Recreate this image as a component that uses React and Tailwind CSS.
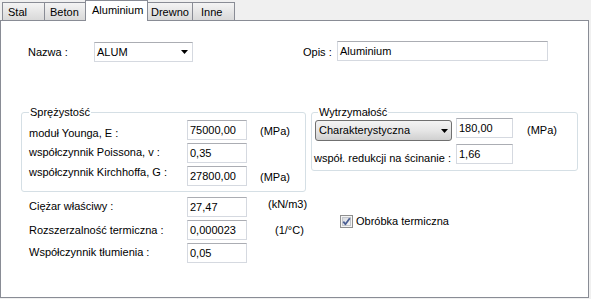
import React from "react";

function TextBox({ value, className = "" }) {
  return (
    <div
      className={`flex h-[20px] shrink-0 items-center border border-[#d5d9e0] border-t-[#abadb3] bg-white pl-[2px] ${className}`}
    >
      {value}
    </div>
  );
}

function Arrow() {
  return (
    <svg width="7" height="4" viewBox="0 0 7 4" className="shrink-0">
      <polygon points="0,0 7,0 3.5,4" fill="#000" />
    </svg>
  );
}

function Tab({ label, selected, className = "" }) {
  if (selected) {
    return (
      <div
        className={`relative z-10 -ml-px flex h-[21px] items-start border border-b-0 border-[#898c95] bg-white pt-[3px] ${className}`}
      >
        {label}
      </div>
    );
  }
  return (
    <div
      className={`mt-[2px] flex h-[18px] items-start border border-b-0 border-[#898c95] bg-gradient-to-b from-[#f4f4f4] to-[#d9d9d9] pt-[3px] ${className}`}
    >
      {label}
    </div>
  );
}

function Row({ label, value, unit, labelMt, unitMt, unitMl, labelW, labelPl }) {
  return (
    <div className="flex h-[20px] items-start">
      <span className={`shrink-0 ${labelW} ${labelPl} ${labelMt}`}>{label}</span>
      <TextBox value={value} className="w-[60px]" />
      {unit && <span className={`shrink-0 ${unitMl} ${unitMt}`}>{unit}</span>}
    </div>
  );
}

export default function App() {
  return (
    <div className="h-[299px] w-[591px] overflow-hidden bg-[#f0f0f0] font-['Liberation_Sans',Arial,sans-serif] text-[11px] leading-[13px] text-black">
      {/* Tabs */}
      <div className="relative z-10 flex h-[20px] items-start">
        <Tab label="Stal" className="ml-[2px] w-[43px] pl-[5px]" />
        <Tab label="Beton" className="-ml-px w-[42px] pl-[5px]" />
        <Tab label="Aluminium" selected className="w-[63px] pl-[6px]" />
        <Tab label="Drewno" className="-ml-px w-[46px] pl-[3px]" />
        <Tab label="Inne" className="-ml-px w-[43px] pl-[8px]" />
      </div>

      {/* Panel */}
      <div className="h-[278px] w-[589px] border border-[#898c95] bg-white pt-[20px]">
        {/* Row 1 */}
        <div className="flex h-[21px] items-start">
          <span className="ml-[27px] mt-[5px] w-[66px] shrink-0">Nazwa :</span>
          <div className="mt-[1px] flex h-[20px] w-[99px] shrink-0 items-center border border-[#d5d9e0] border-t-[#abadb3] bg-white pl-[2px] pr-[4px]">
            <span className="flex-1">ALUM</span>
            <Arrow />
          </div>
          <span className="ml-[110px] mt-[5px] w-[34px] shrink-0">Opis :</span>
          <TextBox value="Aluminium" className="w-[211px]" />
        </div>

        {/* Groups area */}
        <div className="ml-[20px] mt-[50px] flex items-start gap-[5px]">
          {/* Left column */}
          <div className="w-[285px] shrink-0">
            <div className="relative h-[80px] rounded-[3px] border border-[#d5dfe5] pt-[7px]">
              <span className="absolute left-[7px] top-[-7px] bg-white px-[1px]">Sprężystość</span>
              <div className="flex flex-col gap-[3px]">
                <Row
                  label="moduł Younga, E :"
                  value="75000,00"
                  unit="(MPa)"
                  labelW="w-[165px]"
                  labelPl="pl-[7px]"
                  labelMt="mt-[7px]"
                  unitMl="ml-[13px]"
                  unitMt="mt-[5px]"
                />
                <Row
                  label="współczynnik Poissona, v :"
                  value="0,35"
                  labelW="w-[165px]"
                  labelPl="pl-[7px]"
                  labelMt="mt-[3px]"
                />
                <Row
                  label="współczynnik Kirchhoffa, G :"
                  value="27800,00"
                  unit="(MPa)"
                  labelW="w-[165px]"
                  labelPl="pl-[7px]"
                  labelMt="mt-0"
                  unitMl="ml-[13px]"
                  unitMt="mt-[5px]"
                />
              </div>
            </div>
            <div className="mt-[5px] flex flex-col gap-[3px]">
              <Row
                label="Ciężar właściwy :"
                value="27,47"
                unit="(kN/m3)"
                labelW="w-[166px]"
                labelPl="pl-[8px]"
                labelMt="mt-[3px]"
                unitMl="ml-[21px]"
                unitMt="mt-[1px]"
              />
              <Row
                label="Rozszerzalność termiczna :"
                value="0,000023"
                unit="(1/°C)"
                labelW="w-[166px]"
                labelPl="pl-[8px]"
                labelMt="mt-[4px]"
                unitMl="ml-[28px]"
                unitMt="mt-[4px]"
              />
              <Row
                label="Współczynnik tłumienia :"
                value="0,05"
                labelW="w-[166px]"
                labelPl="pl-[8px]"
                labelMt="mt-[3px]"
              />
            </div>
          </div>

          {/* Right column */}
          <div className="w-[267px] shrink-0">
            <div className="relative h-[59px] rounded-[3px] border border-[#d5dfe5] pt-[5px]">
              <span className="absolute left-[6px] top-[-7px] bg-white px-[1px]">Wytrzymałość</span>
              <div className="flex items-start">
                <div className="ml-[3px] mt-[2px] flex h-[21px] w-[137px] shrink-0 items-center rounded-[3px] border border-[#707070] bg-gradient-to-b from-[#f3f3f3] via-[#e6e6e6] to-[#d0d0d0] pl-[3px] pr-[3px]">
                  <span className="flex-1">Charakterystyczna</span>
                  <Arrow />
                </div>
                <TextBox value="180,00" className="ml-[4px] w-[57px]" />
                <span className="ml-[14px] mt-[6px] shrink-0">(MPa)</span>
              </div>
              <div className="mt-[3px] flex items-start">
                <span className="ml-[2px] mt-[8px] w-[142px] shrink-0">współ. redukcji na ścinanie :</span>
                <TextBox value="1,66" className="w-[57px]" />
              </div>
            </div>
            <div className="ml-[29px] mt-[44px] flex items-center">
              <svg width="13" height="13" viewBox="0 0 13 13" className="shrink-0">
                <defs>
                  <linearGradient id="cbg" x1="0" y1="0" x2="1" y2="1">
                    <stop offset="0" stopColor="#d6d9de" />
                    <stop offset="1" stopColor="#f7f7f7" />
                  </linearGradient>
                </defs>
                <rect x="0.5" y="0.5" width="12" height="12" fill="#f4f4f4" stroke="#8e8f8f" />
                <rect x="2.5" y="2.5" width="8" height="8" fill="url(#cbg)" stroke="#c3c6cc" />
                <path d="M3.3 6.6 L5.4 9.2 L9.8 3.2" fill="none" stroke="#4a5e93" strokeWidth="1.8" strokeLinejoin="round" />
              </svg>
              <span className="ml-[3px]">Obróbka termiczna</span>
            </div>
          </div>
        </div>
      </div>
    </div>
  );
}
